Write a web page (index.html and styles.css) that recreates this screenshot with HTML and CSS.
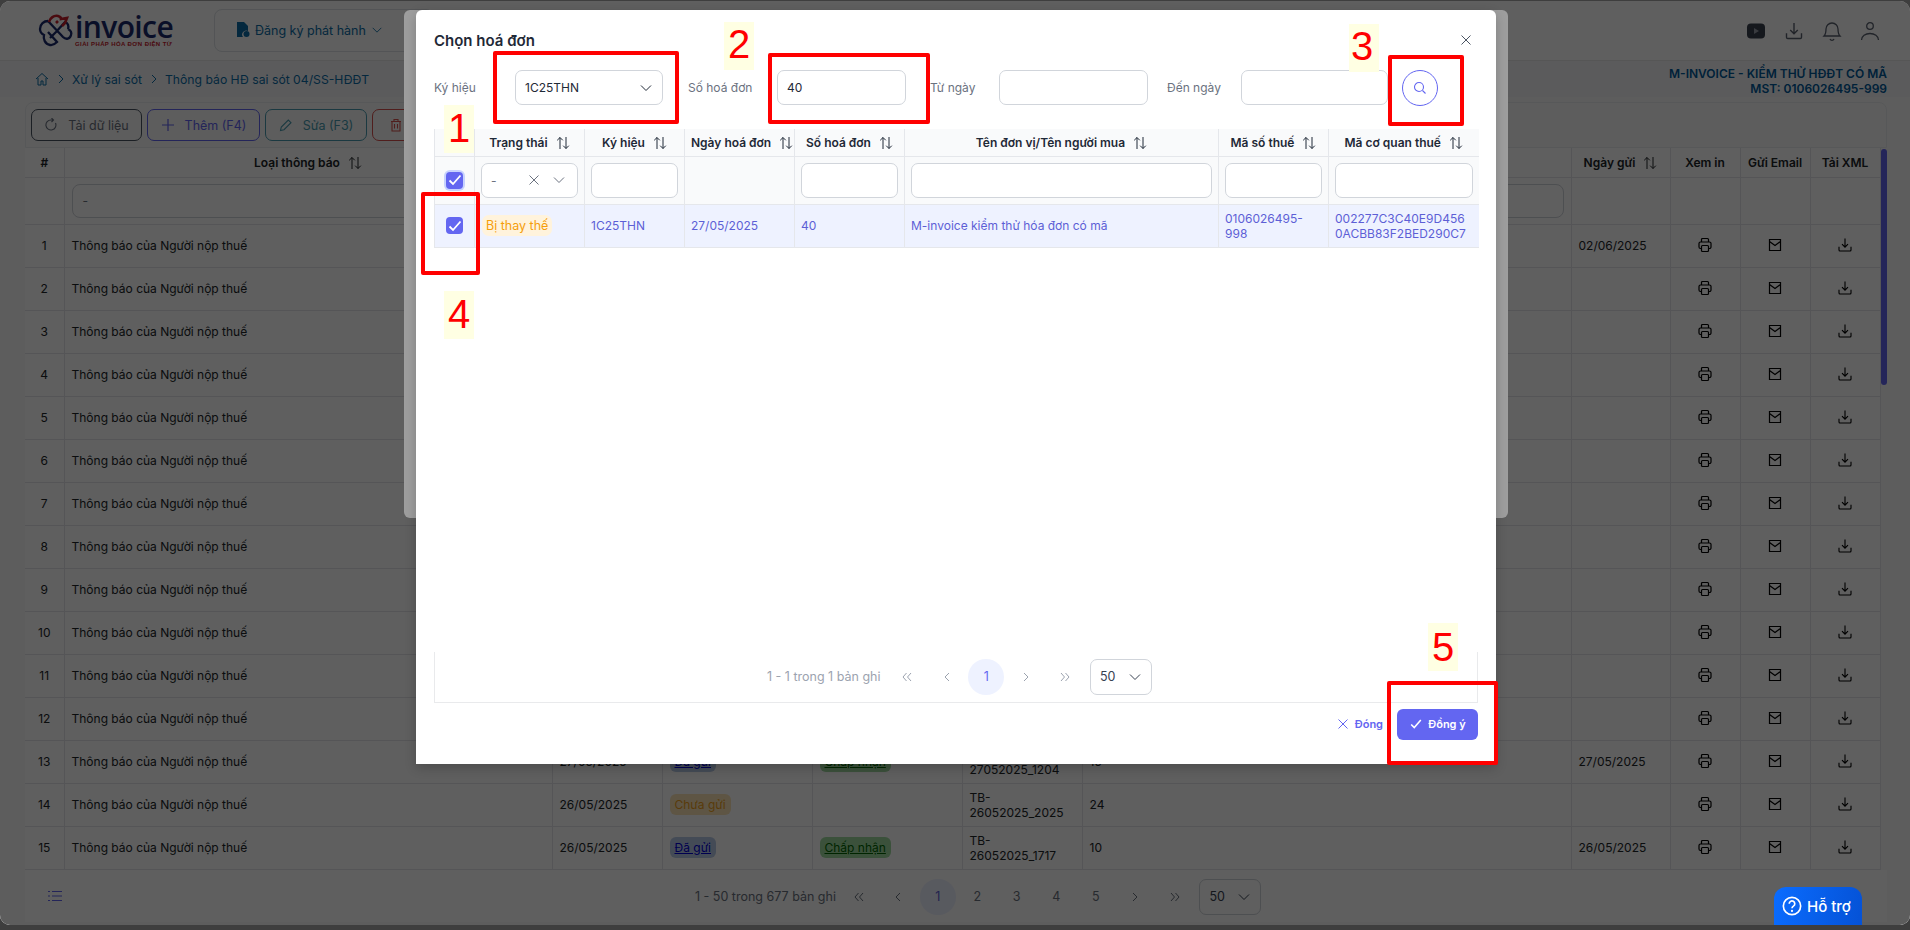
FILE: index.html
```html
<!DOCTYPE html>
<html lang="vi">
<head>
<meta charset="utf-8">
<title>Chọn hoá đơn</title>
<link rel="stylesheet" href="styles.css">
</head>
<body>
<svg class="defs" width="0" height="0">
  <symbol id="sort" viewBox="0 0 14 14"><path d="M4 13V1.500M1.200 4.300 4 1.500l2.800 2.800M10 1v11.500M7.200 9.700l2.800 2.800 2.800-2.800" fill="none" stroke="currentColor" stroke-width="1"/></symbol>
  <symbol id="chev" viewBox="0 0 14 14"><path d="M2 4.500 7 9.500l5-5" fill="none" stroke="currentColor" stroke-width="1"/></symbol>
  <symbol id="print" viewBox="0 0 16 16"><path d="M4.500 5V2.500a1 1 0 0 1 1-1h5a1 1 0 0 1 1 1V5M4.500 11.500h-1a1.500 1.500 0 0 1-1.500-1.500V6.500A1.500 1.500 0 0 1 3.500 5h9A1.500 1.500 0 0 1 14 6.500V10a1.500 1.500 0 0 1-1.500 1.500h-1M5.500 8.500h5a1 1 0 0 1 1 1v4a1 1 0 0 1-1 1h-5a1 1 0 0 1-1-1v-4a1 1 0 0 1 1-1z" fill="none" stroke="currentColor" stroke-width="1.200"/></symbol>
  <symbol id="mail" viewBox="0 0 16 16"><path d="M2.500 2.500h11v11h-11zM2.500 4.500 8 8.500l5.500-4" fill="none" stroke="currentColor" stroke-width="1.200"/></symbol>
  <symbol id="dl" viewBox="0 0 16 16"><path d="M8 1.500v8.500M5 7.200 8 10.200l3-3M2 9.800v3.200a1 1 0 0 0 1 1h10a1 1 0 0 0 1-1V9.800" fill="none" stroke="currentColor" stroke-width="1.100"/></symbol>
  <symbol id="first" viewBox="0 0 14 14"><path d="M6.500 3 3 7l3.500 4M11 3 7.500 7l3.500 4" fill="none" stroke="currentColor" stroke-width="1"/></symbol>
  <symbol id="prev" viewBox="0 0 14 14"><path d="M9 3 5 7l4 4" fill="none" stroke="currentColor" stroke-width="1"/></symbol>
  <symbol id="next" viewBox="0 0 14 14"><path d="m5 3 4 4-4 4" fill="none" stroke="currentColor" stroke-width="1"/></symbol>
  <symbol id="last" viewBox="0 0 14 14"><path d="M3 3l3.500 4L3 11M7.500 3 11 7l-3.500 4" fill="none" stroke="currentColor" stroke-width="1"/></symbol>
  <symbol id="x" viewBox="0 0 14 14"><path d="m2.500 2.500 9 9M11.500 2.500l-9 9" fill="none" stroke="currentColor" stroke-width="1"/></symbol>
  <symbol id="tick" viewBox="0 0 16 16"><path d="m2.500 8.500 3.500 3.500L13.500 3.500" fill="none" stroke="currentColor" stroke-width="1.800"/></symbol>
</svg>

<div class="app">
  <header class="topbar">
    <div class="logo">
      <svg class="logo-mark" viewBox="0 0 36 34" width="36" height="34">
        <path d="M10 7C6 7 2 10 2 15c0 3 2 5 4 6-1 4 1 9 6 10 3 .6 5-1 7-3l-9-10M10 7l15 16c3 3 7 2 8-2 1-3-1-5-3-6M30 15c1-3 0-6-3-7l-9 10-6 6" fill="none" stroke="#1c2a6e" stroke-width="2.300"/>
        <path d="M11 8c1-4 5-7 9-6 2 .5 3 2 3 3l6-1-2 5-3 3M18 9l2-2" fill="none" stroke="#c8202c" stroke-width="2.600"/>
      </svg>
      <div class="logo-text">
        <span class="logo-name">invoice</span>
        <span class="logo-tag">GIẢI PHÁP HÓA ĐƠN ĐIỆN TỬ</span>
      </div>
    </div>
    <nav class="menu-box">
      <svg class="menu-file" width="14" height="16" viewBox="0 0 14 16"><path d="M1 0h7l4 4v5a4 4 0 0 0-5 6H1z" fill="#0d6ea8"/><circle cx="10.500" cy="12" r="3" fill="#0d6ea8"/></svg>
      <span>Đăng ký phát hành</span>
      <svg class="i12" width="12" height="12"><use href="#chev"/></svg>
    </nav>
    <div class="top-icons">
      <svg width="20" height="16" viewBox="0 0 20 16"><rect width="18" height="15" x="1" y=".5" rx="4" fill="#3a4150"/><path d="m8 5 5 3-5 3z" fill="#9aa0aa"/></svg>
      <svg width="20" height="20"><use href="#dl"/></svg>
      <svg width="20" height="22" viewBox="0 0 20 22"><path d="M2 16c2-2 2-4 2-7a6 6 0 0 1 12 0c0 3 0 5 2 7zM8 19a2.200 2.200 0 0 0 4 0" fill="none" stroke="currentColor" stroke-width="1.300"/></svg>
      <svg width="20" height="20" viewBox="0 0 20 20"><circle cx="10" cy="5" r="3.300" fill="none" stroke="currentColor" stroke-width="1.300"/><path d="M1.500 19c0-4 4-6.500 8.500-6.500s8.500 2.500 8.500 6.500" fill="none" stroke="currentColor" stroke-width="1.300"/></svg>
    </div>
  </header>

  <div class="crumbs">
    <svg width="14" height="14" viewBox="0 0 14 14"><path d="M1 7 7 1.500 13 7M3 6v7h3V9h2v4h3V6" fill="none" stroke="currentColor" stroke-width="1"/></svg>
    <svg class="crumb-sep" width="14" height="14"><use href="#next"/></svg>
    <span>Xử lý sai sót</span>
    <svg class="crumb-sep" width="14" height="14"><use href="#next"/></svg>
    <span>Thông báo HĐ sai sót 04/SS-HĐĐT</span>
    <div class="company">
      <div>M-INVOICE - KIỂM THỬ HĐĐT CÓ MÃ</div>
      <div>MST: 0106026495-999</div>
    </div>
  </div>

  <main class="content">
    <div class="toolbar">
      <button class="tbtn t-dark"><svg width="14" height="14" viewBox="0 0 14 14"><path d="M11.500 5A5 5 0 1 1 7 2h2M7.500 0 9.500 2l-2 2" fill="none" stroke="currentColor" stroke-width="1.100"/></svg>Tải dữ liệu</button>
      <button class="tbtn t-blue"><svg width="14" height="14" viewBox="0 0 14 14"><path d="M7 1v12M1 7h12" fill="none" stroke="currentColor" stroke-width="1.200"/></svg>Thêm (F4)</button>
      <button class="tbtn t-teal"><svg width="14" height="14" viewBox="0 0 14 14"><path d="m1.500 12.500.8-3.500 7-7 2.700 2.700-7 7z" fill="none" stroke="currentColor" stroke-width="1.100"/></svg>Sửa (F3)</button>
      <button class="tbtn t-red"><svg width="14" height="14" viewBox="0 0 14 14"><path d="M2 3.500h10M5 3.500V1.500h4v2M3 3.500v9.500h8V3.500M5.500 6v4.500M8.500 6v4.500" fill="none" stroke="currentColor" stroke-width="1.100"/></svg></button>
    </div>

    <div class="grid-wrap">
      <table class="list">
        <colgroup>
          <col class="c-num"><col class="c-type"><col class="c-date"><col class="c-status"><col class="c-state"><col class="c-code"><col class="c-count"><col class="c-sent"><col class="c-act"><col class="c-act"><col class="c-act">
        </colgroup>
        <thead>
          <tr class="head">
            <th>#</th>
            <th>Loại thông báo <svg class="sort" width="14" height="14"><use href="#sort"/></svg></th>
            <th></th><th></th><th></th><th></th><th></th>
            <th>Ngày gửi <svg class="sort" width="14" height="14"><use href="#sort"/></svg></th>
            <th>Xem in</th><th>Gửi Email</th><th>Tải XML</th>
          </tr>
          <tr class="filter">
            <th></th>
            <th colspan="6"><div class="list-filter">-</div></th>
            <th></th><th></th><th></th><th></th>
          </tr>
        </thead>
        <tbody>
          <tr><td class="ctr">1</td><td>Thông báo của Người nộp thuế</td><td></td><td></td><td></td><td></td><td></td><td>02/06/2025</td><td class="ctr"><svg class="ic"><use href="#print"/></svg></td><td class="ctr"><svg class="ic"><use href="#mail"/></svg></td><td class="ctr"><svg class="ic"><use href="#dl"/></svg></td></tr>
          <tr><td class="ctr">2</td><td>Thông báo của Người nộp thuế</td><td></td><td></td><td></td><td></td><td></td><td></td><td class="ctr"><svg class="ic"><use href="#print"/></svg></td><td class="ctr"><svg class="ic"><use href="#mail"/></svg></td><td class="ctr"><svg class="ic"><use href="#dl"/></svg></td></tr>
          <tr><td class="ctr">3</td><td>Thông báo của Người nộp thuế</td><td></td><td></td><td></td><td></td><td></td><td></td><td class="ctr"><svg class="ic"><use href="#print"/></svg></td><td class="ctr"><svg class="ic"><use href="#mail"/></svg></td><td class="ctr"><svg class="ic"><use href="#dl"/></svg></td></tr>
          <tr><td class="ctr">4</td><td>Thông báo của Người nộp thuế</td><td></td><td></td><td></td><td></td><td></td><td></td><td class="ctr"><svg class="ic"><use href="#print"/></svg></td><td class="ctr"><svg class="ic"><use href="#mail"/></svg></td><td class="ctr"><svg class="ic"><use href="#dl"/></svg></td></tr>
          <tr><td class="ctr">5</td><td>Thông báo của Người nộp thuế</td><td></td><td></td><td></td><td></td><td></td><td></td><td class="ctr"><svg class="ic"><use href="#print"/></svg></td><td class="ctr"><svg class="ic"><use href="#mail"/></svg></td><td class="ctr"><svg class="ic"><use href="#dl"/></svg></td></tr>
          <tr><td class="ctr">6</td><td>Thông báo của Người nộp thuế</td><td></td><td></td><td></td><td></td><td></td><td></td><td class="ctr"><svg class="ic"><use href="#print"/></svg></td><td class="ctr"><svg class="ic"><use href="#mail"/></svg></td><td class="ctr"><svg class="ic"><use href="#dl"/></svg></td></tr>
          <tr><td class="ctr">7</td><td>Thông báo của Người nộp thuế</td><td></td><td></td><td></td><td></td><td></td><td></td><td class="ctr"><svg class="ic"><use href="#print"/></svg></td><td class="ctr"><svg class="ic"><use href="#mail"/></svg></td><td class="ctr"><svg class="ic"><use href="#dl"/></svg></td></tr>
          <tr><td class="ctr">8</td><td>Thông báo của Người nộp thuế</td><td></td><td></td><td></td><td></td><td></td><td></td><td class="ctr"><svg class="ic"><use href="#print"/></svg></td><td class="ctr"><svg class="ic"><use href="#mail"/></svg></td><td class="ctr"><svg class="ic"><use href="#dl"/></svg></td></tr>
          <tr><td class="ctr">9</td><td>Thông báo của Người nộp thuế</td><td></td><td></td><td></td><td></td><td></td><td></td><td class="ctr"><svg class="ic"><use href="#print"/></svg></td><td class="ctr"><svg class="ic"><use href="#mail"/></svg></td><td class="ctr"><svg class="ic"><use href="#dl"/></svg></td></tr>
          <tr><td class="ctr">10</td><td>Thông báo của Người nộp thuế</td><td></td><td></td><td></td><td></td><td></td><td></td><td class="ctr"><svg class="ic"><use href="#print"/></svg></td><td class="ctr"><svg class="ic"><use href="#mail"/></svg></td><td class="ctr"><svg class="ic"><use href="#dl"/></svg></td></tr>
          <tr><td class="ctr">11</td><td>Thông báo của Người nộp thuế</td><td></td><td></td><td></td><td></td><td></td><td></td><td class="ctr"><svg class="ic"><use href="#print"/></svg></td><td class="ctr"><svg class="ic"><use href="#mail"/></svg></td><td class="ctr"><svg class="ic"><use href="#dl"/></svg></td></tr>
          <tr><td class="ctr">12</td><td>Thông báo của Người nộp thuế</td><td></td><td></td><td></td><td></td><td></td><td></td><td class="ctr"><svg class="ic"><use href="#print"/></svg></td><td class="ctr"><svg class="ic"><use href="#mail"/></svg></td><td class="ctr"><svg class="ic"><use href="#dl"/></svg></td></tr>
          <tr><td class="ctr">13</td><td>Thông báo của Người nộp thuế</td><td>27/05/2025</td><td><span class="badge b-blue"><a>Đã gửi</a></span></td><td><span class="badge b-green"><a>Chấp nhận</a></span></td><td>TB-<br>27052025_1204</td><td>15</td><td>27/05/2025</td><td class="ctr"><svg class="ic"><use href="#print"/></svg></td><td class="ctr"><svg class="ic"><use href="#mail"/></svg></td><td class="ctr"><svg class="ic"><use href="#dl"/></svg></td></tr>
          <tr><td class="ctr">14</td><td>Thông báo của Người nộp thuế</td><td>26/05/2025</td><td><span class="badge b-orange">Chưa gửi</span></td><td></td><td>TB-<br>26052025_2025</td><td>24</td><td></td><td class="ctr"><svg class="ic"><use href="#print"/></svg></td><td class="ctr"><svg class="ic"><use href="#mail"/></svg></td><td class="ctr"><svg class="ic"><use href="#dl"/></svg></td></tr>
          <tr><td class="ctr">15</td><td>Thông báo của Người nộp thuế</td><td>26/05/2025</td><td><span class="badge b-blue"><a>Đã gửi</a></span></td><td><span class="badge b-green"><a>Chấp nhận</a></span></td><td>TB-<br>26052025_1717</td><td>10</td><td>26/05/2025</td><td class="ctr"><svg class="ic"><use href="#print"/></svg></td><td class="ctr"><svg class="ic"><use href="#mail"/></svg></td><td class="ctr"><svg class="ic"><use href="#dl"/></svg></td></tr>
        </tbody>
      </table>
      <div class="scrollbar"></div>
    </div>

    <div class="list-pager">
      <svg class="list-ic" width="14" height="12" viewBox="0 0 14 12"><path d="M0 1.500h2M4 1.500h10M0 6h2M4 6h10M0 10.500h2M4 10.500h10" stroke="currentColor" stroke-width="1.200"/></svg>
      <div class="pager p-main">
        <span class="pg-info">1 - 50 trong 677 bản ghi</span>
        <span class="pg-btn"><svg width="14" height="14"><use href="#first"/></svg></span>
        <span class="pg-btn"><svg width="14" height="14"><use href="#prev"/></svg></span>
        <span class="pg-btn on">1</span>
        <span class="pg-btn">2</span><span class="pg-btn">3</span><span class="pg-btn">4</span><span class="pg-btn">5</span>
        <span class="pg-btn"><svg width="14" height="14"><use href="#next"/></svg></span>
        <span class="pg-btn"><svg width="14" height="14"><use href="#last"/></svg></span>
        <span class="pg-size">50 <svg width="14" height="14"><use href="#chev"/></svg></span>
      </div>
    </div>
  </main>

  <div class="mask mask-a"></div>
  <div class="modal-back"></div>
  <div class="mask mask-b"></div>

  <section class="modal">
    <div class="m-head">
      <h2>Chọn hoá đơn</h2>
      <svg class="m-close" width="14" height="14"><use href="#x"/></svg>
    </div>
    <div class="m-form">
      <label class="l1">Ký hiệu</label>
      <div class="field f1">1C25THN <svg width="14" height="14"><use href="#chev"/></svg></div>
      <label class="l2">Số hoá đơn</label>
      <div class="field f2">40</div>
      <label class="l3">Từ ngày</label>
      <div class="field f3"></div>
      <label class="l4">Đến ngày</label>
      <div class="field f4"></div>
      <span class="search"><svg width="14" height="14" viewBox="0 0 14 14"><circle cx="6" cy="6" r="4.500" fill="none" stroke="currentColor" stroke-width="1.100"/><path d="m9.500 9.500 3 3" stroke="currentColor" stroke-width="1.100"/></svg></span>
    </div>

    <table class="pick">
      <colgroup><col class="p0"><col class="p1"><col class="p1b"><col class="p1"><col class="p1"><col class="p2"><col class="p1"><col class="p3"></colgroup>
      <thead>
        <tr class="p-head">
          <th></th>
          <th>Trạng thái <svg class="sort" width="14" height="14"><use href="#sort"/></svg></th>
          <th>Ký hiệu <svg class="sort" width="14" height="14"><use href="#sort"/></svg></th>
          <th>Ngày hoá đơn <svg class="sort" width="14" height="14"><use href="#sort"/></svg></th>
          <th>Số hoá đơn <svg class="sort" width="14" height="14"><use href="#sort"/></svg></th>
          <th>Tên đơn vị/Tên người mua <svg class="sort" width="14" height="14"><use href="#sort"/></svg></th>
          <th>Mã số thuế <svg class="sort" width="14" height="14"><use href="#sort"/></svg></th>
          <th>Mã cơ quan thuế <svg class="sort" width="14" height="14"><use href="#sort"/></svg></th>
        </tr>
        <tr class="p-filter">
          <th><span class="cb cb-focus"><svg width="16" height="16" viewBox="0 0 16 16"><use href="#tick"/></svg></span></th>
          <th><div class="finput fsel"><span>-</span><svg width="14" height="14"><use href="#x"/></svg><svg width="14" height="14"><use href="#chev"/></svg></div></th>
          <th><div class="finput"></div></th>
          <th></th>
          <th><div class="finput"></div></th>
          <th><div class="finput"></div></th>
          <th><div class="finput"></div></th>
          <th><div class="finput"></div></th>
        </tr>
      </thead>
      <tbody>
        <tr class="p-row">
          <td class="cbcell"><span class="cb"><svg width="16" height="16" viewBox="0 0 16 16"><use href="#tick"/></svg></span></td>
          <td class="tag-cell"><span class="tag">Bị thay thế</span></td>
          <td>1C25THN</td>
          <td>27/05/2025</td>
          <td>40</td>
          <td>M-invoice kiểm thử hóa đơn có mã</td>
          <td>0106026495-<br>998</td>
          <td>002277C3C40E9D456<br>0ACBB83F2BED290C7</td>
        </tr>
      </tbody>
    </table>

    <div class="m-spacer"></div>

    <div class="m-pager">
      <div class="pager p-modal">
        <span class="pg-info">1 - 1 trong 1 bản ghi</span>
        <span class="pg-btn"><svg width="14" height="14"><use href="#first"/></svg></span>
        <span class="pg-btn"><svg width="14" height="14"><use href="#prev"/></svg></span>
        <span class="pg-btn on">1</span>
        <span class="pg-btn"><svg width="14" height="14"><use href="#next"/></svg></span>
        <span class="pg-btn"><svg width="14" height="14"><use href="#last"/></svg></span>
        <span class="pg-size">50 <svg width="14" height="14"><use href="#chev"/></svg></span>
      </div>
    </div>

    <div class="m-foot">
      <span class="f-close"><svg width="14" height="14"><use href="#x"/></svg>Đóng</span>
      <span class="f-ok"><svg width="14" height="14" viewBox="0 0 16 16"><use href="#tick"/></svg>Đồng ý</span>
    </div>
  </section>

  <div class="mark box-1"></div>
  <div class="mark box-2"></div>
  <div class="mark box-3"></div>
  <div class="mark box-4"></div>
  <div class="mark box-5"></div>
  <div class="num n-1">1</div>
  <div class="num n-2">2</div>
  <div class="num n-3">3</div>
  <div class="num n-4">4</div>
  <div class="num n-5">5</div>

  <div class="help">
    <svg width="20" height="20" viewBox="0 0 18 18"><circle cx="9" cy="9" r="7.800" fill="none" stroke="#fff" stroke-width="1.500"/><path d="M6.500 7a2.500 2.500 0 1 1 3.800 2.100c-.9.600-1.300 1-1.300 2" fill="none" stroke="#fff" stroke-width="1.500"/><circle cx="9" cy="13.400" r="1" fill="#fff"/></svg>
    <span>Hỗ trợ</span>
  </div>
</div>
</body>
</html>
```
FILE: styles.css
```css
* { box-sizing: border-box; }
html, body { margin: 0; padding: 0; height: 100%; }
body {
  background: #3e3e3e;
  font-family: Inter, "Noto Sans", "Liberation Sans", sans-serif;
  font-size: 12px;
  color: #212529;
  overflow: hidden;
}
.defs { position: absolute; }

.app {
  position: relative;
  width: 1910px;
  height: 924px;
  margin-top: 1px;
  background: #fff;
  border-radius: 10px;
  overflow: hidden;
  display: flex;
  flex-direction: column;
}

/* top bar */
.topbar {
  flex: 0 0 60px;
  display: flex;
  align-items: center;
  padding: 0 30px 0 38px;
  border-bottom: 1px solid #e8e8e8;
}
.logo { display: flex; align-items: center; gap: 1px; width: 176px; }
.logo-mark { flex: none; }
.logo-text { display: flex; flex-direction: column; }
.logo-name { font-family: "Open Sans", sans-serif; font-size: 30px; line-height: 25px; color: #1c2a6e; font-weight: 600; letter-spacing: -.6px; }
.logo-tag { font-family: "Liberation Sans", sans-serif; font-size: 6px; line-height: 7px; margin-top: 2px; font-weight: 700; color: #c8202c; letter-spacing: .4px; white-space: nowrap; }
.menu-box {
  width: 220px;
  height: 43px;
  margin-top: -1px;
  padding-left: 21px;
  border: 1px solid #dfe3e8;
  border-radius: 8px;
  display: flex;
  align-items: center;
  gap: 5px;
  color: #0d6ea8;
  font-size: 12.500px;
}
.top-icons { margin-left: auto; display: flex; align-items: center; gap: 18px; color: #5b6270; margin-top: 1px; }

/* breadcrumb */
.crumbs {
  flex: 0 0 36px;
  display: flex;
  align-items: center;
  padding: 0 23px 0 35px;
  gap: 4px;
  background: #f6f7f8;
  color: #0d6ea8;
  font-size: 12.200px;
}
.crumb-sep { margin: 0 0 0 1px; }
.company { margin-left: auto; margin-top: 3px; text-align: right; font-weight: 600; font-size: 12px; line-height: 15px; color: #005a9c; }

/* content */
.content {
  flex: 1;
  min-height: 0;
  padding: 5px 23px 3px 25px;
  background: #fbfbfb;
  display: flex;
  flex-direction: column;
}
.toolbar {
  flex: 0 0 46px;
  display: flex;
  align-items: center;
  gap: 5px;
  padding: 0 5px;
  border: 1px solid #eceef0;
  border-radius: 8px 8px 0 0;
}
.tbtn {
  height: 32px;
  padding: 0;
  display: inline-flex;
  align-items: center;
  justify-content: center;
  gap: 10px;
  border: 1px solid;
  border-radius: 7px;
  background: transparent;
  font-family: inherit;
  font-size: 12.500px;
  white-space: nowrap;
}
.t-dark { width: 111px; color: #6b7280; border-color: #4b5563; }
.t-blue { width: 113px; color: #6366f1; border-color: #6366f1; }
.t-teal { width: 102px; color: #4a9bb0; border-color: #4a9bb0; }
.t-red { width: 110px; color: #d9534f; border-color: #d9534f; justify-content: flex-start; padding-left: 16px; }

.grid-wrap { display: flex; align-items: flex-start; flex: none; position: relative; }
.list { width: 1855px; table-layout: fixed; border-collapse: collapse; background: #fff; }
.c-num { width: 39px; }
.c-type { width: 488px; }
.c-date { width: 110px; }
.c-status { width: 150px; }
.c-state { width: 150px; }
.c-code { width: 120px; }
.c-count { width: 489px; }
.c-sent { width: 99px; }
.c-act { width: 70px; }
.list th, .list td { border: 1px solid #e5e7eb; padding: 0 7px; overflow: hidden; }
.list tr > :first-child { border-left: 0; }
.list thead th { border-top: 0; }
.list th { font-weight: 600; text-align: center; white-space: nowrap; background: #fff; }
.head { height: 29px; }
.filter { height: 47px; }
.list tbody tr { height: 43px; }
.list td { line-height: 15px; white-space: nowrap; }
.ctr { text-align: center; padding: 0 !important; }
.ic { width: 16px; height: 16px; vertical-align: middle; margin-top: -3px; color: #000; }
.sort { vertical-align: -3px; margin-left: 5px; }
.list-filter { height: 34px; border: 1px solid #d1d5db; border-radius: 8px; line-height: 32px; text-align: left; padding-left: 10px; font-weight: 400; color: #6b7280; }
.badge { display: inline-block; height: 21px; line-height: 21px; padding: 0 5px; border-radius: 6px; font-size: 12px; }
.badge a { text-decoration: underline; }
.b-blue { background: #b8cbe8; color: #0000d8; }
.b-green { background: #9fdc9f; color: #006400; }
.b-orange { background: #fde6b8; color: #f0a020; }
.scrollbar { width: 7px; height: 236px; background: #6366f1; border-radius: 4px; margin-top: 1px; }

.list-pager { flex: 1; position: relative; display: flex; align-items: center; background: #fff; padding-left: 23px; }
.list-ic { color: #6366f1; }

.pager { display: flex; align-items: center; color: #6b7280; }
.p-main { position: absolute; left: 670px; top: 9px; }
.pg-info { font-size: 12.500px; color: #6b7280; margin-right: 3px; }
.pg-btn { width: 39.500px; height: 36px; display: inline-flex; align-items: center; justify-content: center; font-size: 12.500px; color: #6b7280; }
.pg-btn.on { width: 36px; margin: 0 1.750px; border-radius: 50%; background: #eef2ff; color: #5d5fd6; }
.pg-size { width: 62px; height: 36px; margin-left: 5px; border: 1px solid #d1d5db; border-radius: 7px; display: inline-flex; align-items: center; justify-content: space-between; padding: 0 9px; font-size: 12.500px; color: #374151; }

/* masks */
.mask { position: absolute; inset: 0; }
.mask-a { background: rgba(0,0,0,.4); }
.mask-b { background: rgba(0,0,0,.38); }
.modal-back { position: absolute; left: 404px; top: 9px; width: 1104px; height: 508px; background: #fff; border-radius: 6px; }

/* modal */
.modal {
  position: absolute;
  left: 416px;
  top: 9px;
  width: 1080px;
  height: 754px;
  background: #fff;
  border-radius: 6px 6px 0 0;
  padding: 0 18px;
  display: flex;
  flex-direction: column;
  box-shadow: 0 4px 12px rgba(0,0,0,.2);
}
.m-head { flex: 0 0 60px; display: flex; align-items: flex-start; justify-content: space-between; padding-top: 21px; }
.m-head h2 { margin: 0; font-size: 15px; line-height: 20px; font-weight: 600; color: #1f2937; }
.m-close { color: #4b5563; margin: 2px 5px 0 0; }
.m-form { flex: 0 0 59px; display: flex; align-items: flex-start; font-size: 12px; }
.m-form label { line-height: 35px; color: #6b7280; }
.field { height: 35px; border: 1px solid #d1d5db; border-radius: 7px; padding: 0 9px; line-height: 33px; color: #1f2937; display: flex; align-items: center; justify-content: space-between; font-size: 12px; }
.l1 { width: 81px; }
.f1 { width: 148px; }
.l2 { width: 89px; margin-left: 25px; }
.f2 { width: 129px; }
.l3 { width: 69px; margin-left: 24px; }
.f3 { width: 149px; }
.l4 { width: 74px; margin-left: 19px; }
.f4 { width: 147px; }
.search { width: 36px; height: 36px; margin-left: 14px; border: 1px solid #6366f1; border-radius: 50%; display: flex; align-items: center; justify-content: center; color: #6366f1; }

.pick { width: 1044px; table-layout: fixed; border-collapse: collapse; flex: none; }
.p0 { width: 40px; }
.p1 { width: 110px; }
.p1b { width: 100px; }
.p2 { width: 314px; }
.p3 { width: 150px; }
.pick th, .pick td { border: 1px solid #e5e7eb; padding: 0 6px; background: #f9fafb; }
.pick thead th { border-top: 0; }
.pick th:last-child, .pick td:last-child { border-right: 0; }
.p-head th { height: 27px; font-weight: 600; text-align: center; color: #1f2937; white-space: nowrap; }
.p-filter th { height: 48px; padding: 0 6px; text-align: center; }
.finput { height: 35px; border: 1px solid #d1d5db; border-radius: 7px; background: #fff; }
.fsel { display: flex; align-items: center; padding: 0 11px 0 9px; font-weight: 400; color: #6b7280; gap: 11px; }
.fsel span { flex: 1; text-align: left; }
.p-row td { height: 43px; background: #eef2ff; color: #5d5fd6; line-height: 15px; white-space: nowrap; font-size: 12px; }
.cbcell { text-align: center; padding: 0 !important; }
.tag-cell { padding-left: 6px !important; }
.cb { display: inline-flex; width: 17px; height: 17px; align-items: center; justify-content: center; background: #6366f1; border-radius: 4px; color: #fff; vertical-align: middle; }
.cb-focus { box-shadow: 0 0 0 2px #c7d2fe; }
.tag { display: inline-block; margin-left: 1px; padding: 0 4px; height: 21px; line-height: 21px; border-radius: 7px; background: #fff3dc; color: #f59e0b; font-size: 12.500px; }

.m-spacer { flex: 0 0 404px; }
.m-pager { flex: 0 0 51px; border: 1px solid #e9eaec; border-top: 0; position: relative; }
.p-modal { position: absolute; left: 332px; top: 7px; }
.p-modal .pg-info { color: #9ca3af; margin-right: 7px; }
.p-modal .pg-btn { color: #9ca3af; }
.p-modal .pg-btn.on { color: #6366f1; }
.p-modal .pg-size { margin-left: 5px; }
.m-foot { flex: 1; display: flex; align-items: flex-start; justify-content: flex-end; gap: 14px; padding: 6px 0 0; font-size: 11px; font-weight: 600; }
.f-close { height: 31px; display: flex; align-items: center; gap: 5px; color: #6366f1; }
.f-ok { width: 81px; height: 31px; background: #6366f1; border-radius: 6px; color: #fff; display: flex; align-items: center; justify-content: center; gap: 5px; }

/* annotations drawn on the screenshot */
.mark { position: absolute; border: 4px solid #ff0000; border-radius: 2px; }
.box-1 { left: 493px; top: 50px; width: 186px; height: 73px; }
.box-2 { left: 768px; top: 52px; width: 162px; height: 71px; }
.box-3 { left: 1388px; top: 54px; width: 76px; height: 71px; }
.box-4 { left: 421px; top: 191px; width: 59px; height: 83px; }
.box-5 { left: 1387px; top: 680px; width: 111px; height: 84px; }
.num {
  position: absolute;
  width: 30px;
  height: 48px;
  background: #ffffe3;
  color: #ff0000;
  font-family: "Liberation Sans", sans-serif;
  font-size: 40px;
  line-height: 46px;
  text-align: center;
}
.n-1 { left: 444px; top: 104px; }
.n-2 { left: 724px; top: 21px; line-height: 44px; }
.n-3 { left: 1349px; top: 23px; line-height: 44px; text-indent: -4px; }
.n-4 { left: 444px; top: 290px; }
.n-5 { left: 1428px; top: 622px; line-height: 48px; }

.help {
  position: absolute;
  left: 1774px;
  top: 886px;
  width: 88px;
  height: 38px;
  padding-left: 8px;
  border-radius: 12px 12px 0 0;
  background: linear-gradient(100deg, #0a6cff, #0552d6);
  color: #fff;
  font-size: 15px;
  font-weight: 500;
  display: flex;
  align-items: center;
  gap: 5px;
}
```
